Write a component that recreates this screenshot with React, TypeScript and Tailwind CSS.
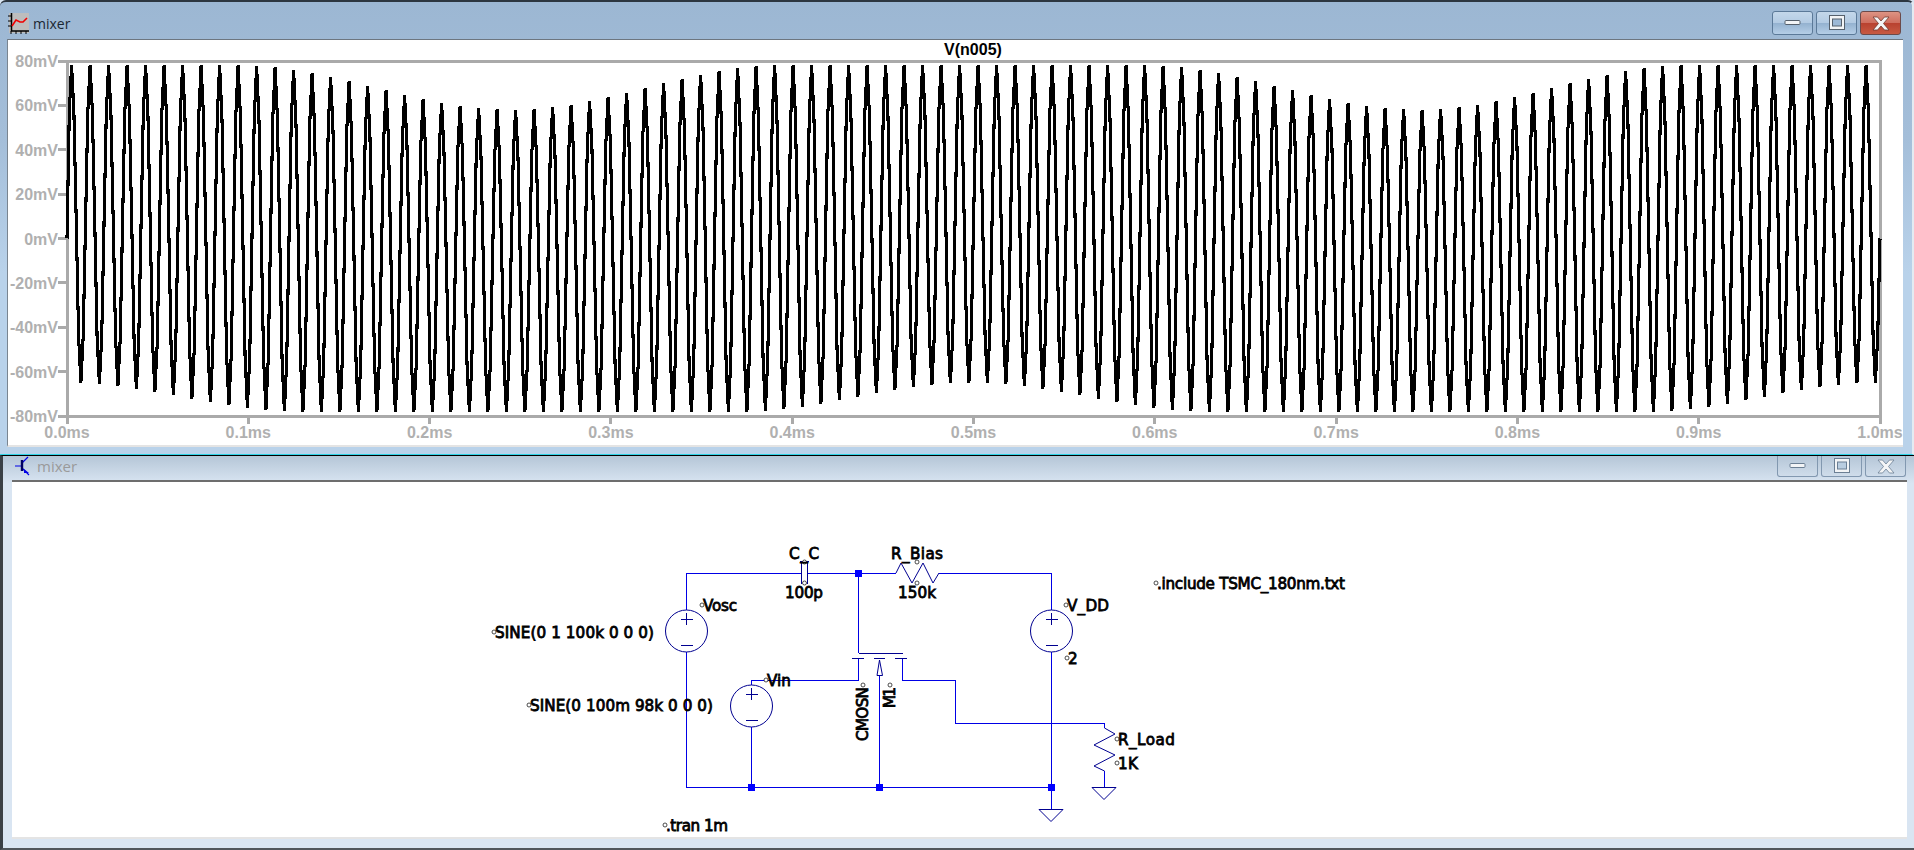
// App.tsx
const AXIS = "#aaaaaa";
const LABEL = "#b0b0b0";
const WIRE = "#0000e6";
const SYM = "#000090";

// plot area, page coordinates
const PX0 = 66;
const PX1 = 1879;
const PY0 = 61;
const PY1 = 416;

// envelope read off the trace: crests sag around 0.245ms, troughs lift around 0 and 0.5ms
function crest(t: number) {
  const d = Math.abs((t % 0.5) - 0.245);
  return d < 0.15 ? 78 - 20 * Math.cos((Math.PI * d) / 0.3) ** 2 : 78;
}

function trough(t: number) {
  const m = t % 0.5;
  const d = Math.min(m, 0.5 - m);
  return d < 0.13 ? -78 + 13 * Math.cos((Math.PI * d) / 0.26) ** 2 : -78;
}

function wavePoints() {
  const pts: string[] = [];
  // 8 samples per carrier cycle so every crest and trough lands on a point
  const count = 98 * 8;
  for (let i = 0; i <= count; i++) {
    const t = i / count;
    const top = crest(t);
    const bottom = trough(t);
    const v = (top + bottom) / 2 + ((top - bottom) / 2) * Math.sin(2 * Math.PI * 98 * t);
    const start = i === 0 || i === count ? 0 : v;
    const x = PX0 + t * (PX1 - PX0);
    const y = PY0 + ((80 - start) / 160) * (PY1 - PY0);
    pts.push(`${x.toFixed(1)},${y.toFixed(1)}`);
  }
  return pts.join(" ");
}

const yLabels = ["80mV", "60mV", "40mV", "20mV", "0mV", "-20mV", "-40mV", "-60mV", "-80mV"];
const xLabels = ["0.0ms", "0.1ms", "0.2ms", "0.3ms", "0.4ms", "0.5ms", "0.6ms", "0.7ms", "0.8ms", "0.9ms", "1.0ms"];

function WaveIcon() {
  return (
    <svg width="21" height="21" viewBox="0 0 21 21" className="shrink-0">
      <rect x="1" y="0" width="20" height="20" fill="#bdbdbd" />
      <path d="M3.5 0V18H21" fill="none" stroke="#000" strokeWidth="1.5" />
      <path d="M0 3H3M0 8H3M0 13H3M8 18V21M13 18V21M18 18V21M3 18V21" stroke="#000" strokeWidth="1" />
      <path d="M4 13L8 7L12 9L15 9L19 5" fill="none" stroke="#f00000" strokeWidth="1.6" />
    </svg>
  );
}

function TransistorIcon() {
  return (
    <svg width="16" height="20" viewBox="0 0 16 20" className="shrink-0">
      <path d="M0 10H6M7 7L13 1M7 12L14 19" fill="none" stroke="#0000e6" strokeWidth="1.2" />
      <path d="M7 4V15" stroke="#000060" strokeWidth="2.4" />
      <path d="M9 13L14 17L9 17Z" fill="#0000e6" />
    </svg>
  );
}

function Glyph({ kind, faded }: { kind: "min" | "max" | "close"; faded?: boolean }) {
  const edge = faded ? "#6b7f94" : "#55606c";
  if (kind === "min")
    return (
      <svg width="18" height="8" viewBox="0 0 18 8">
        <rect x="1" y="1.5" width="15" height="4" rx="1" fill="#f2f4f6" stroke={edge} />
      </svg>
    );
  if (kind === "max")
    return (
      <svg width="18" height="18" viewBox="0 0 18 18">
        <rect x="1.5" y="1.5" width="15" height="14" fill="#f2f4f6" stroke={edge} />
        <rect x="4.5" y="5" width="9" height="7" fill={faded ? "#b9cde0" : "#9db9d6"} stroke={edge} />
      </svg>
    );
  return (
    <svg width="20" height="17" viewBox="0 0 20 17">
      <path
        d="M2 2H6.5L10 6L13.5 2H18L12.5 8.5L18 15H13.5L10 11L6.5 15H2L7.5 8.5Z"
        fill="#f4f5f6"
        stroke={faded ? "#6b7f94" : "#6e3a30"}
        strokeWidth="0.8"
      />
    </svg>
  );
}

function ActiveButtons() {
  return (
    <div className="flex gap-[3px] pt-[9px] pr-[2px]">
      <div className="flex h-[24px] w-[41px] items-center justify-center rounded-[3px] border border-[#5b7998] bg-[linear-gradient(#c3d7ea_0%,#b3cbe3_48%,#93b1cf_50%,#b5cee7_100%)]">
        <Glyph kind="min" />
      </div>
      <div className="flex h-[24px] w-[41px] items-center justify-center rounded-[3px] border border-[#5b7998] bg-[linear-gradient(#c3d7ea_0%,#b3cbe3_48%,#93b1cf_50%,#b5cee7_100%)]">
        <Glyph kind="max" />
      </div>
      <div className="flex h-[24px] w-[41px] items-center justify-center rounded-[3px] border border-[#6c4a4a] bg-[linear-gradient(#dd9383_0%,#cf6f5f_48%,#b8412f_50%,#c75a42_100%)]">
        <Glyph kind="close" />
      </div>
    </div>
  );
}

function InactiveButtons() {
  return (
    <div className="flex gap-[3px] pr-[1px]">
      <div className="flex h-[21px] w-[41px] items-center justify-center rounded-b-[3px] border border-t-0 border-[#8298b0]">
        <Glyph kind="min" faded />
      </div>
      <div className="flex h-[21px] w-[41px] items-center justify-center rounded-b-[3px] border border-t-0 border-[#8298b0]">
        <Glyph kind="max" faded />
      </div>
      <div className="flex h-[21px] w-[41px] items-center justify-center rounded-b-[3px] border border-t-0 border-[#8298b0]">
        <Glyph kind="close" faded />
      </div>
    </div>
  );
}

function WaveformPlot() {
  const axisFont = { fontFamily: '"Liberation Sans", Arial, sans-serif' };
  return (
    <svg width="1896" height="406" viewBox="7 40 1896 406" className="block" style={axisFont}>
      <rect x={PX0} y={PY0} width={PX1 - PX0} height={PY1 - PY0} fill="none" stroke={AXIS} strokeWidth="3" shapeRendering="crispEdges" />
      {yLabels.map((label, i) => {
        const y = PY0 + (i * (PY1 - PY0)) / 8;
        return (
          <g key={label}>
            <line x1="57" x2={PX0} y1={y} y2={y} stroke={AXIS} strokeWidth="3" shapeRendering="crispEdges" />
            <text x="57" y={y + 6} textAnchor="end" fontSize="16" fontWeight="700" fill={LABEL}>
              {label}
            </text>
          </g>
        );
      })}
      {xLabels.map((label, i) => {
        const x = PX0 + (i * (PX1 - PX0)) / 10;
        return (
          <g key={label}>
            <line x1={x} x2={x} y1={PY1} y2="424" stroke={AXIS} strokeWidth="3" shapeRendering="crispEdges" />
            <text x={x} y="438" textAnchor="middle" fontSize="16" fontWeight="700" fill={LABEL}>
              {label}
            </text>
          </g>
        );
      })}
      <text x="972" y="55" textAnchor="middle" fontSize="16" fontWeight="700" fill="#000">
        V(n005)
      </text>
      <polyline points={wavePoints()} fill="none" stroke="#000" strokeWidth="3.1" strokeLinejoin="miter" strokeMiterlimit="8" shapeRendering="crispEdges" />
    </svg>
  );
}

function Source({ cx, cy }: { cx: number; cy: number }) {
  return (
    <g>
      <circle cx={cx} cy={cy} r="21" fill="none" stroke={SYM} strokeWidth="1" />
      <path d={`M${cx - 6} ${cy - 12}H${cx + 6}M${cx} ${cy - 18}V${cy - 6}M${cx - 6} ${cy + 14}H${cx + 6}`} stroke={SYM} strokeWidth="1" shapeRendering="crispEdges" />
    </g>
  );
}

function Dot({ x, y }: { x: number; y: number }) {
  return <rect x={x - 3.5} y={y - 3.5} width="7" height="7" fill="#0000ff" shapeRendering="crispEdges" />;
}

function Label({ x, y, w, text, circle = true }: { x: number; y: number; w: number; text: string; circle?: boolean }) {
  return (
    <g>
      {circle ? <circle cx={x - 1} cy={y - 6} r="2" fill="#fff" stroke="#222" strokeWidth="0.8" /> : null}
      <text x={x} y={y} textLength={w} fontSize="15.2" fill="#000" stroke="#000" strokeWidth="0.8">
        {text}
      </text>
    </g>
  );
}

function Schematic() {
  return (
    <svg width="1895" height="355" viewBox="12 482 1895 355" className="block" style={{ fontFamily: '"DejaVu Sans", Verdana, sans-serif' }}>
      {/* wires */}
      <path
        d="M802 573.5H686.5V610M686.5 652V787.5H1051.5M807 573.5H896M939 573.5H1051.5V610M1051.5 652V809M858.5 573.5V653M751.5 685V680.5H858.5V658M751.5 727V787.5M879.5 675V787.5M902.5 658V680.5H955.5V723.5H1104.5V728M1104.5 771V787"
        fill="none"
        stroke={WIRE}
        strokeWidth="1"
        shapeRendering="crispEdges"
      />
      {/* nmos + passives */}
      <path d="M858.5 653.5H902.5M852 658.5H864M874 658.5H885M895 658.5H907" fill="none" stroke={SYM} strokeWidth="1" shapeRendering="crispEdges" />
      <path d="M879.5 660L877 675.5H882.5Z" fill="#fff" stroke={SYM} strokeWidth="1" />
      <path d="M801.5 561V584M807.5 561V584M800 561.5H809" fill="none" stroke={SYM} strokeWidth="1" shapeRendering="crispEdges" />
      <path d="M896 573L901 563L912 583L923 563L933 583L939 573" fill="none" stroke={SYM} strokeWidth="1" />
      <path d="M1104.5 728L1115 734L1094 745L1115 755L1094 766L1104.5 771" fill="none" stroke={SYM} strokeWidth="1" />
      <path d="M1039 809.5H1063L1051 821.5Z" fill="none" stroke={SYM} strokeWidth="1" />
      <path d="M1092 787.5H1116L1104 799.5Z" fill="none" stroke={SYM} strokeWidth="1" />
      <Source cx={686.5} cy={631} />
      <Source cx={751.5} cy={706} />
      <Source cx={1051.5} cy={631} />
      <Dot x={858.5} y={573.5} />
      <Dot x={751.5} y={787.5} />
      <Dot x={879.5} y={787.5} />
      <Dot x={1051.5} y={787.5} />
      <circle cx="804.5" cy="562" r="2" fill="#fff" stroke="#222" strokeWidth="0.8" />
      <circle cx="804.5" cy="583" r="2" fill="#fff" stroke="#222" strokeWidth="0.8" />
      <circle cx="917" cy="562" r="2" fill="#fff" stroke="#222" strokeWidth="0.8" />
      <circle cx="917" cy="583" r="2" fill="#fff" stroke="#222" strokeWidth="0.8" />
      {/* labels */}
      <Label x={789} y={559} w={30} text="C_C" circle={false} />
      <Label x={785} y={598} w={38} text="100p" circle={false} />
      <Label x={891} y={559} w={52} text="R_Bias" circle={false} />
      <Label x={898} y={598} w={38} text="150k" circle={false} />
      <Label x={703} y={611} w={34} text="Vosc" />
      <Label x={1067} y={611} w={42} text="V_DD" />
      <Label x={1068} y={664} w={9} text="2" />
      <Label x={495} y={638} w={159} text="SINE(0 1 100k 0 0 0)" />
      <Label x={530} y={711} w={183} text="SINE(0 100m 98k 0 0 0)" />
      <Label x={767} y={686} w={24} text="Vin" />
      <Label x={666} y={831} w={62} text=".tran 1m" />
      <Label x={1157} y={589} w={188} text=".include TSMC_180nm.txt" />
      <Label x={1118} y={745} w={57} text="R_Load" />
      <Label x={1118} y={769} w={20} text="1K" />
      <g transform="translate(868 741) rotate(-90)">
        <Label x={0} y={0} w={54} text="CMOSN" circle={false} />
      </g>
      <circle cx="863" cy="685" r="2" fill="#fff" stroke="#222" strokeWidth="0.8" />
      <g transform="translate(895 708) rotate(-90)">
        <Label x={0} y={0} w={21} text="M1" circle={false} />
      </g>
      <circle cx="890" cy="685" r="2" fill="#fff" stroke="#222" strokeWidth="0.8" />
    </svg>
  );
}

export default function App() {
  return (
    <div className="flex h-[850px] w-[1914px] flex-col overflow-hidden bg-[#d9e5f2]">
      {/* plot window */}
      <div className="flex h-[455px] shrink-0 flex-col rounded-t-[6px] border-t-2 border-r-2 border-b border-t-[#2c3640] border-r-[#e4ebf2] border-b-[#2fd3e6] bg-[linear-gradient(#9cb7d3_0%,#a4bed9_30%,#b9d2ea_60%,#b9d2ea_100%)] pr-[9px] pl-[7px]">
        <div className="flex h-[37px] shrink-0 items-start justify-between">
          <div className="flex items-center gap-[4px] pt-[11px] pl-px">
            <WaveIcon />
            <span className="text-[14px] leading-[20px] text-[#1b2733]" style={{ fontFamily: '"Open Sans", sans-serif' }}>
              mixer
            </span>
          </div>
          <ActiveButtons />
        </div>
        <div className="h-[408px] shrink-0 border-t border-l border-b-2 border-t-[#6d7680] border-l-[#7a8590] border-b-[#e4e4e4] bg-white">
          <WaveformPlot />
        </div>
      </div>

      {/* schematic window */}
      <div className="flex h-[395px] shrink-0 flex-col border-t border-b-2 border-l-3 border-t-black border-b-[#50565c] border-l-[#3a4046] bg-[linear-gradient(#b5c6d7_0%,#d9e5f2_7%,#d9e5f2_100%)] pr-[7px] pl-[9px]">
        <div className="flex h-[24px] shrink-0 items-start justify-between">
          <div className="flex items-center gap-[6px] pl-[3px]">
            <TransistorIcon />
            <span className="text-[15px] leading-[20px] text-[#9a9a9a]" style={{ fontFamily: '"Open Sans", sans-serif' }}>
              mixer
            </span>
          </div>
          <InactiveButtons />
        </div>
        <div className="h-[359px] shrink-0 border-t-2 border-b-2 border-t-[#6d6d6d] border-b-[#e4e4e4] bg-white">
          <Schematic />
        </div>
      </div>
    </div>
  );
}
